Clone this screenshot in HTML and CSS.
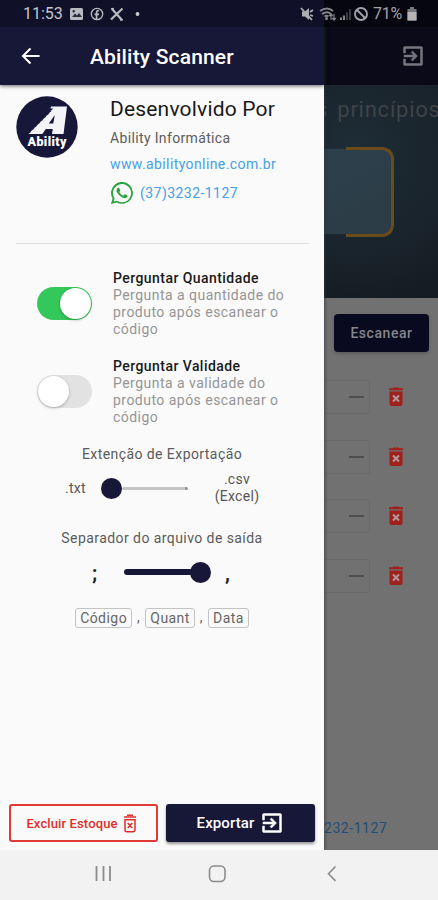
FILE: index.html
```html
<!DOCTYPE html>
<html lang="pt-BR">
<head>
<meta charset="utf-8">
<title>Ability Scanner</title>
<link rel="stylesheet" href="styles.css">
</head>
<body>
<svg class="defs" aria-hidden="true">
  <symbol id="exit" viewBox="0 0 24 24"><path fill="currentColor" stroke="currentColor" stroke-width=".5" d="M10.1 15.6 11.5 17l5-5-5-5-1.400 1.400 2.600 2.600H3v2h9.700zM20 2.500H4a1.500 1.500 0 0 0-1.500 1.500v5h2V4.500h15v15h-15V15h-2v5A1.500 1.500 0 0 0 4 21.500h16a1.500 1.500 0 0 0 1.500-1.500V4A1.500 1.500 0 0 0 20 2.500z"/></symbol>
  <symbol id="trash" viewBox="0 0 16 20"><path fill="#a0211c" d="M4.500 1.200 5.500.5h5l1 .7H15v2H1v-2zM1.500 4.500h13V17a2 2 0 0 1-2 2h-9a2 2 0 0 1-2-2z"/><path d="m5 8.500 6 6m0-6-6 6" stroke="#b09a98" stroke-width="2"/></symbol>
</svg>
<div class="phone">
  <div class="screen">
    <main class="page">
      <header class="page-bar"><svg class="i24"><use href="#exit"/></svg></header>
      <section class="hero">
        <p class="hero-text">s princípios</p>
        <div class="scan-area"><div class="scan-frame"></div></div>
      </section>
      <div class="scan-row"><span class="scan-btn">Escanear</span></div>
      <ul class="items">
        <li><span class="qty"><i></i></span><svg class="bin"><use href="#trash"/></svg></li>
        <li><span class="qty"><i></i></span><svg class="bin"><use href="#trash"/></svg></li>
        <li><span class="qty"><i></i></span><svg class="bin"><use href="#trash"/></svg></li>
        <li><span class="qty"><i></i></span><svg class="bin"><use href="#trash"/></svg></li>
      </ul>
      <footer class="page-phone">232-1127</footer>
    </main>
    <aside class="drawer">
      <header class="drawer-bar">
        <svg class="back" viewBox="0 0 20 20"><path d="M18.500 9H2.500M9.500 1.500 2 9l7.500 7.500" fill="none" stroke="#fff" stroke-width="2.100"/></svg>
        <h1>Ability Scanner</h1>
      </header>
      <section class="about">
        <svg class="logo" viewBox="0 0 62 62">
          <circle cx="31" cy="31" r="30.700" fill="#17173a"/>
          <path fill="#f4f4f8" d="M35 10.500h16L47.500 38H36l.8-5h-7l-3.500 5H12.500l3-2.500h-1l4-3h-1l4-3h-1l4-3h-1l4-3h-1l4-3h-1l4-3h-1l3-2.500h-1l3-2.500h-3zM38.800 19l-6 8.500h4.500z"/>
          <text x="31" y="50" text-anchor="middle" textLength="39">Ability</text>
        </svg>
        <div class="about-text">
          <h2>Desenvolvido Por</h2>
          <p class="company">Ability Informática</p>
          <a class="site">www.abilityonline.com.br</a>
          <a class="tel"><svg viewBox="0 0 24 24"><path fill="#27a33d" d="M17.470 14.380c-.3-.15-1.760-.87-2.030-.97-.27-.1-.47-.15-.67.150-.2.300-.77.970-.94 1.160-.17.200-.35.220-.65.080-.3-.15-1.260-.46-2.390-1.480-.88-.79-1.480-1.760-1.650-2.060-.17-.3-.02-.46.130-.61.130-.13.300-.35.450-.52.150-.17.200-.3.300-.5.100-.2.050-.37-.03-.52-.07-.15-.67-1.610-.91-2.210-.24-.58-.49-.5-.67-.51h-.57c-.2 0-.52.070-.79.370s-1.040 1.020-1.040 2.480 1.070 2.880 1.210 3.070c.15.200 2.100 3.200 5.080 4.490.71.300 1.260.49 1.690.63.710.230 1.360.190 1.870.120.570-.09 1.760-.72 2.010-1.410.25-.7.250-1.290.17-1.410-.07-.13-.27-.2-.57-.35M12 22a10 10 0 0 1-5-1.400l-.4-.2-3.700 1 1-3.600-.2-.4A9.900 9.900 0 1 1 12 22M20.500 3.500A11.900 11.900 0 0 0 1.700 17.800L0 24l6.300-1.700A11.900 11.900 0 0 0 20.500 3.500"/></svg><span>(37)3232-1127</span></a>
        </div>
      </section>
      <hr>
      <section class="option">
        <span class="switch on"></span>
        <div><h3>Perguntar Quantidade</h3><p>Pergunta a quantidade do<br>produto após escanear o<br>código</p></div>
      </section>
      <section class="option">
        <span class="switch"></span>
        <div><h3>Perguntar Validade</h3><p>Pergunta a validade do<br>produto após escanear o<br>código</p></div>
      </section>
      <h4 class="ext-title">Extenção de Exportação</h4>
      <div class="slider-row ext">
        <span class="txt">.txt</span>
        <span class="slider left"><i class="track"></i></span>
        <span class="csv">.csv<br>(Excel)</span>
      </div>
      <h4 class="sep-title">Separador do arquivo de saída</h4>
      <div class="slider-row sep">
        <b>;</b><span class="slider right"><i class="track"></i></span><b>,</b>
      </div>
      <div class="chips"><span>Código</span><i>,</i><span>Quant</span><i>,</i><span>Data</span></div>
      <div class="actions">
        <span class="btn clear"><span>Excluir Estoque</span><svg viewBox="0 0 14 19"><path d="M1 3h12M4 1.200h6M2 5.700h10v10a2 2 0 0 1-2 2H4a2 2 0 0 1-2-2zM4.700 9l4.600 5m0-5-4.600 5" fill="none" stroke="#de2f2b" stroke-width="1.500"/></svg></span>
        <span class="btn export"><span>Exportar</span><svg class="i24"><use href="#exit"/></svg></span>
      </div>
    </aside>
    <div class="status">
      <span class="clock">11:53</span>
      <svg class="notif" viewBox="0 0 74 16">
        <rect x="1" y="2" width="13" height="12" rx="1.500" fill="#b9b9c2"/><path d="M3 11l3-3.500 2 2 2-2.500 3 4z" fill="#292a40"/><circle cx="4.700" cy="5.300" r="1.200" fill="#292a40"/>
        <circle cx="28" cy="8" r="5.700" fill="none" stroke="#b9b9c2" stroke-width="1.300"/><path d="M27.600 13V6.500q0-2 2.400-1.800M25.500 8.300h4.500" fill="none" stroke="#b9b9c2" stroke-width="1.700"/>
        <path d="m43 3 10 11M53.500 2.500 42 13.500" stroke="#b9b9c2" stroke-width="2.200"/><path d="m42 3 3-.5M51 14l3-.3" stroke="#b9b9c2" stroke-width="1.500"/>
        <circle cx="68.500" cy="8" r="1.900" fill="#c9c9d0"/>
      </svg>
      <svg class="signals" viewBox="0 0 70 16">
        <path d="M2 5.500h3l4-3.500v12L5 10.500H2z" fill="#aeaeb5"/><path d="m1 2 11 12M10 6l3-2M10 9l3 1" stroke="#aeaeb5" stroke-width="1.800"/>
        <path d="M20 5q7-5 13 0M22 8q5-3.500 9 0M24.500 10.500q2-1.500 4 0" fill="none" stroke="#85858d" stroke-width="1.900"/><circle cx="26.500" cy="12.500" r="1.500" fill="#85858d"/><path d="M31 14V8m-1.700 2L31 8l1.700 2M34 8v6m-1.700-2 1.700 2 1.700-2" fill="none" stroke="#85858d" stroke-width="1.200"/>
        <path d="M40 14v-2.500h2V14zm3 0V9.500h2V14z" fill="#85858d"/><path d="M46 14V6.500h2V14zm3 0V3h2v11z" fill="#3a3a42"/>
        <circle cx="61" cy="8" r="6" fill="none" stroke="#a2a2a6" stroke-width="1.900"/><path d="m57 4 8 8" stroke="#a2a2a6" stroke-width="1.900"/>
      </svg>
      <span class="pct">71%</span>
      <svg class="battery" viewBox="0 0 10 14"><path d="M3 0h4v2h2.500v11.500h-9V2H3z" fill="#77777b"/><path d="M.5 5h9v8.500h-9z" fill="#b5b5b5"/></svg>
    </div>
  </div>
  <nav class="nav">
    <svg viewBox="0 0 438 50" fill="none" stroke="#8b8b8b"><path d="M96.500 16v15M103.500 16v15M110 16v15" stroke-width="1.800"/><rect x="209.500" y="16" width="15.500" height="15.500" rx="4.500" stroke-width="1.600"/><path d="m335.500 16.500-7 7.200 7 7.200" stroke-width="1.600"/></svg>
  </nav>
</div>
</body>
</html>
```
FILE: styles.css
```css
* { box-sizing: border-box; margin: 0; padding: 0; }
body { font-family: Roboto, "Liberation Sans", sans-serif; width: 438px; height: 900px; overflow: hidden; }
.defs { display: none; }
svg { display: block; flex: none; }
.phone { display: flex; flex-direction: column; height: 900px; }
.screen { display: grid; grid-template: 850px / 438px; overflow: hidden; }
.page, .drawer, .status { grid-area: 1 / 1; }
.i24 { width: 24px; height: 24px; }

.status { height: 27px; background: linear-gradient(90deg, #101028 324px, #060610 324px); display: flex; align-items: center; padding: 0 20px 0 23px; z-index: 3; font-size: 16px; color: #c5c5cd; }
.clock { width: 46px; letter-spacing: 0; }
.notif { width: 74px; height: 16px; }
.signals { width: 70px; height: 16px; margin-left: 157px; }
.pct { color: #a2a2a6; width: 32px; margin-left: 3px; font-size: 16px; letter-spacing: -.3px; }
.battery { width: 10px; height: 14px; margin-left: 2px; }

.page { background: #717171; display: flex; flex-direction: column; padding-left: 324px; overflow: hidden; }
.page-bar { height: 85px; padding: 44px 13px 0 0; background: #0a0a18; color: #76767e; display: flex; justify-content: flex-end; }
.hero { height: 213px; background: radial-gradient(circle at 30px 70px, #1e2d36, #19232b 60%, #141b21); padding-top: 12px; overflow: hidden; }
.hero-text { font-size: 22px; line-height: 26px; white-space: nowrap; color: #3e4347; letter-spacing: .75px; word-spacing: 3px; margin-left: -8px; }
.scan-area { margin-top: 24px; width: 70px; height: 90px; padding-left: 22px; background: linear-gradient(150deg, #2c404c, #2d3c46) 0 2px / 67px 85px no-repeat; }
.scan-frame { height: 90px; border: 3px solid #6a4c1b; border-left: 0; border-radius: 0 12px 12px 0; }
.scan-row { padding: 16px 9px 0 10px; height: 69px; }
.scan-btn { display: block; height: 38px; border-radius: 4px; background: #090920; color: #85858b; text-align: center; font-size: 14px; font-weight: 500; line-height: 38px; letter-spacing: .55px; box-shadow: 0 2px 3px #4447; }
.items { list-style: none; }
.items li { display: flex; height: 59.7px; align-items: center; }
.qty { width: 46px; height: 34px; border: 1px solid #6a6a6a; border-left: 0; border-radius: 0 3px 3px 0; display: flex; align-items: center; justify-content: flex-end; padding-right: 5px; }
.qty i { width: 15px; height: 2px; background: #4e4e4e; }
.bin { width: 16px; height: 20px; margin-left: 18px; }
.page-phone { margin-top: auto; margin-bottom: 13px; color: #234d75; font-size: 14px; line-height: 18px; letter-spacing: .55px; }

.drawer { width: 324px; background: #fafafa; display: flex; flex-direction: column; z-index: 2; box-shadow: 1px 0 3px #333a; }
.drawer-bar { height: 85px; padding: 28px 21px 0; background: #171738; color: #fff; display: flex; align-items: center; box-shadow: 0 1px 4px #0009; flex: none; }
.back { width: 20px; height: 20px; }
h1 { font-size: 21px; font-weight: 500; margin-left: 49px; letter-spacing: .17px; white-space: nowrap; }
.about { display: flex; padding: 11px 16px 0; height: 158px; }
.logo { width: 62px; height: 62px; }
.logo text { font-family: Roboto, sans-serif; font-size: 12.500px; font-weight: 900; fill: #fff; }
.about-text { margin-left: 32px; display: flex; flex-direction: column; white-space: nowrap; }
h2 { font-size: 21px; font-weight: 400; line-height: 26px; color: #191919; letter-spacing: .18px; }
.company { font-size: 14px; line-height: 18px; margin-top: 7px; color: #5c5c5c; letter-spacing: .35px; }
.site { color: #46a0e6; font-size: 14px; line-height: 18px; margin-top: 8px; letter-spacing: .4px; }
.tel { display: flex; align-items: center; margin-top: 9px; color: #46a0e6; font-size: 14px; letter-spacing: .45px; }
.tel svg { width: 22px; height: 22px; margin: 0 7px 0 1px; }
hr { border: 0; height: 1px; flex: none; background: #dedede; margin: 0 15px 0 16px; }
.option { display: flex; height: 88px; padding-left: 37px; }
.option > div { margin: 26px 0 0 21px; white-space: nowrap; }
.switch { width: 55px; height: 33px; border-radius: 17px; background: #e2e2e2; padding: 1px; margin-top: 43px; display: flex; flex: none; }
.switch::before { content: ""; width: 31px; height: 31px; border-radius: 50%; background: #fff; box-shadow: 0 1px 3px #0004; }
.switch.on { background: #34c759; justify-content: flex-end; }
h3 { font-size: 14px; line-height: 17px; font-weight: 500; color: #191919; letter-spacing: .44px; }
.option p { font-size: 14px; line-height: 17px; color: #959595; letter-spacing: .47px; }
h4 { font-size: 14px; line-height: 18px; font-weight: 400; color: #5a5a5a; text-align: center; letter-spacing: .43px; }
.ext-title { margin-top: 25px; }
.slider-row { display: flex; align-items: center; color: #555; font-size: 14px; }
.ext { height: 51px; padding-left: 65px; letter-spacing: .3px; }
.txt { width: 36px; line-height: 18px; margin-top: -1px; }
.csv { width: 70px; text-align: center; line-height: 17px; margin: -1px 0 0 14px; }
.slider { display: flex; align-items: center; width: 87px; }
.slider .track { flex: 1; height: 3px; border-radius: 2px; background: linear-gradient(90deg, #c4c4c4 calc(100% - 3px), #999 0); }
.slider::before, .slider::after { width: 21px; height: 21px; border-radius: 50%; background: #171738; }
.slider.left::before, .slider.right::after { content: ""; }
.slider.right .track { height: 6px; border-radius: 3px; background: #171738; margin-right: -3px; }
.sep-title { margin-top: 15px; }
.sep { height: 50px; padding-left: 92px; }
.sep b { font-size: 20px; width: 32px; color: #222; font-weight: 700; margin-top: 2px; }
.sep b:last-child { margin-left: 14px; width: 20px; }
.chips { margin-top: 11px; display: flex; justify-content: center; gap: 5px; font-size: 14px; color: #666; line-height: 18px; letter-spacing: .45px; }
.chips span { border: 1px solid #c3c3c3; border-radius: 3px; padding: 0 4px; height: 20px; }
.chips i { font-style: normal; }
.actions { display: flex; gap: 8px; margin: auto 8px 8px 9px; }
.btn { height: 38px; width: 149px; border-radius: 3px; display: flex; align-items: center; justify-content: center; font-weight: 500; }
.clear { border: 2px solid #e03a36; color: #de2f2b; font-size: 13px; gap: 5px; letter-spacing: .12px; padding-right: 4px; white-space: nowrap; }
.clear svg { width: 14px; height: 19px; }
.export { background: #171738; color: #fff; font-size: 15px; gap: 6px; letter-spacing: .1px; box-shadow: 0 2px 3px #0006; }
.nav { height: 50px; background: #f2f2f2; }
.nav svg { width: 438px; height: 50px; }
```
